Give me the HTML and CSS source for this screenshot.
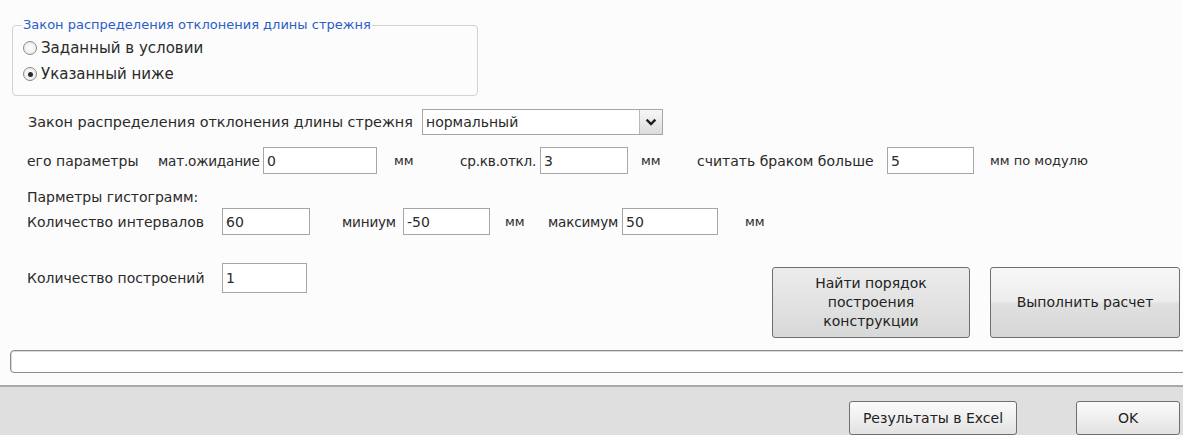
FILE: index.html
```html
<!DOCTYPE html>
<html lang="ru">
<head>
<meta charset="utf-8">
<title>Параметры расчета</title>
<link rel="stylesheet" href="styles.css">
</head>
<body>
<div class="window">
  <main class="content">
    <fieldset class="group">
      <legend class="group-title">Закон распределения отклонения длины стрежня</legend>
      <div class="radio"><span class="radio-mark"></span><span>Заданный в условии</span></div>
      <div class="radio"><span class="radio-mark is-checked"></span><span>Указанный ниже</span></div>
    </fieldset>

    <div class="row row-law">
      <span class="lbl lbl-law">Закон распределения отклонения длины стрежня</span>
      <div class="combo">
        <span class="combo-value">нормальный</span>
        <span class="combo-btn">
          <svg width="12" height="9" viewBox="0 0 12 9"><path d="M2.5 2.5 L6 6 L9.5 2.5" fill="none" stroke="#1e1e1e" stroke-width="2.4" stroke-linecap="square"/></svg>
        </span>
      </div>
    </div>

    <div class="row row-params">
      <span class="lbl">его параметры</span>
      <span class="lbl lbl-tight">мат.ожидание</span>
      <span class="field">0</span>
      <span class="lbl unit unit-a">мм</span>
      <span class="lbl lbl-tight">ср.кв.откл.</span>
      <span class="field">3</span>
      <span class="lbl unit unit-b">мм</span>
      <span class="lbl">считать браком больше</span>
      <span class="field">5</span>
      <span class="lbl unit">мм по модулю</span>
    </div>

    <div class="caption">Парметры гистограмм:</div>

    <div class="row row-hist">
      <span class="lbl">Количество интервалов</span>
      <span class="field">60</span>
      <span class="lbl lbl-tight lbl-min">миниум</span>
      <span class="field">-50</span>
      <span class="lbl unit unit-c">мм</span>
      <span class="lbl lbl-tight">максимум</span>
      <span class="field">50</span>
      <span class="lbl unit unit-d">мм</span>
    </div>

    <div class="row-build">
      <div class="build-count">
        <span class="lbl">Количество построений</span>
        <span class="field field-tall">1</span>
      </div>
      <div class="actions">
        <button class="btn btn-big btn-dim">Найти порядок<br>построения<br>конструкции</button>
        <button class="btn btn-big btn-run">Выполнить расчет</button>
      </div>
    </div>

    <div class="progress"></div>
  </main>

  <footer class="footer">
    <button class="btn btn-foot btn-excel">Результаты в Excel</button>
    <button class="btn btn-foot btn-ok">OK</button>
  </footer>
</div>
</body>
</html>
```

FILE: styles.css
```css
* {
  box-sizing: border-box;
}

html,
body {
  margin: 0;
  padding: 0;
}

body {
  width: 1183px;
  height: 435px;
  overflow: hidden;
  background: #fcfcfc;
  font-family: "DejaVu Sans", Verdana, sans-serif;
  font-size: 14px;
  color: #2a2a2a;
}

.window {
  display: flex;
  flex-direction: column;
  height: 435px;
}

.content {
  flex: 1 1 auto;
  display: flex;
  flex-direction: column;
}

/* group box with the two radio options */
.group {
  margin: 17px 0 0 12px;
  width: 466px;
  padding: 2px 9px 8px;
  border: 1px solid #d2d2d2;
  border-radius: 4px;
}

.group-title {
  padding: 0 1px;
  line-height: 16px;
  font-size: 13px;
  color: #2b5ec6;
}

.radio {
  display: flex;
  align-items: center;
  height: 26px;
  padding-left: 1px;
  font-size: 15px;
}

.radio-mark {
  width: 14px;
  height: 14px;
  margin-right: 4px;
  border: 1px solid #8a8a8a;
  border-radius: 50%;
  background: radial-gradient(circle, #ffffff 0%, #e6e6e6 100%);
  display: flex;
  align-items: center;
  justify-content: center;
}

.radio-mark.is-checked::after {
  content: "";
  width: 5px;
  height: 5px;
  border-radius: 50%;
  background: #2a2a2a;
}

/* form rows */
.row {
  display: grid;
  align-items: center;
  padding-left: 27px;
  white-space: nowrap;
}

.lbl {
  white-space: nowrap;
}

/* labels that sit right against their input box */
.lbl-tight {
  font-size: 13.6px;
  letter-spacing: -0.2px;
}

.field {
  display: flex;
  align-items: center;
  height: 27px;
  padding-left: 3px;
  border: 1px solid #a6a6a6;
  background: #ffffff;
}

.field-tall {
  height: 30px;
  width: 85px;
}

.unit {
  padding-left: 16px;
  font-size: 13px;
}

.unit-a {
  padding-left: 17px;
}

.unit-b {
  padding-left: 13px;
}

.row-law {
  margin-top: 13px;
  padding-left: 28px;
  grid-template-columns: 394px 241px;
}

.lbl-law {
  font-size: 14.4px;
}

.combo {
  display: flex;
  height: 26px;
  border: 1px solid #a6a6a6;
  background: #ffffff;
}

.combo-value {
  flex: 1 1 auto;
  display: flex;
  align-items: center;
  padding-left: 3px;
}

.combo-btn {
  width: 23px;
  display: flex;
  align-items: center;
  justify-content: center;
  border-left: 1px solid #b8b8b8;
  background: linear-gradient(#f7f7f7, #dcdcdc);
}

.row-params {
  margin-top: 12px;
  grid-template-columns: 131px 105px 114px 83px 80px 88px 69px 190px 87px auto;
}

.caption {
  margin-top: 15px;
  padding-left: 27px;
  line-height: 16px;
}

.row-hist {
  margin-top: 3px;
  grid-template-columns: 195px 88px 93px 87px 58px 74px 96px auto;
}

.lbl-min {
  padding-left: 32px;
}

.unit-c {
  padding-left: 15px;
}

.unit-d {
  padding-left: 27px;
}

/* count of builds + the two action buttons */
.row-build {
  display: flex;
  align-items: flex-start;
  justify-content: space-between;
  margin-top: 28px;
  padding-left: 27px;
  padding-right: 3px;
}

.build-count {
  display: grid;
  grid-template-columns: 195px 85px;
  align-items: center;
}

.actions {
  display: flex;
  gap: 20px;
  margin-top: 4px;
}

.btn {
  font: inherit;
  color: #222222;
  border: 1px solid #6f6f6f;
  border-radius: 3px;
  background: linear-gradient(#f7f7f7 0%, #ededed 48%, #e0e0e0 52%, #d6d6d6 100%);
  padding: 0;
  text-align: center;
  line-height: 19px;
}

.btn-big {
  height: 71px;
}

.btn-dim {
  width: 198px;
  background: linear-gradient(#ececec 0%, #e2e2e2 50%, #d8d8d8 100%);
}

.btn-run {
  width: 190px;
}

.progress {
  margin: 12px -10px 0 10px;
  height: 23px;
  border: 1px solid #8c8c8c;
  border-radius: 4px;
  background: #ffffff;
  box-shadow: inset 0 1px 0 #d8d8d8, inset 1px 0 0 #d8d8d8;
}

/* bottom button strip */
.footer {
  flex: 0 0 46px;
  display: flex;
  justify-content: flex-end;
  align-items: flex-start;
  gap: 59px;
  padding: 14px 3px 0 0;
  border-top: 2px solid #a9a9a9;
  background: #dfdfdf;
}

.btn-foot {
  height: 34px;
  background: linear-gradient(#fbfbfb 0%, #efefef 50%, #e2e2e2 100%);
}

.btn-excel {
  width: 168px;
}

.btn-ok {
  width: 104px;
}
```
